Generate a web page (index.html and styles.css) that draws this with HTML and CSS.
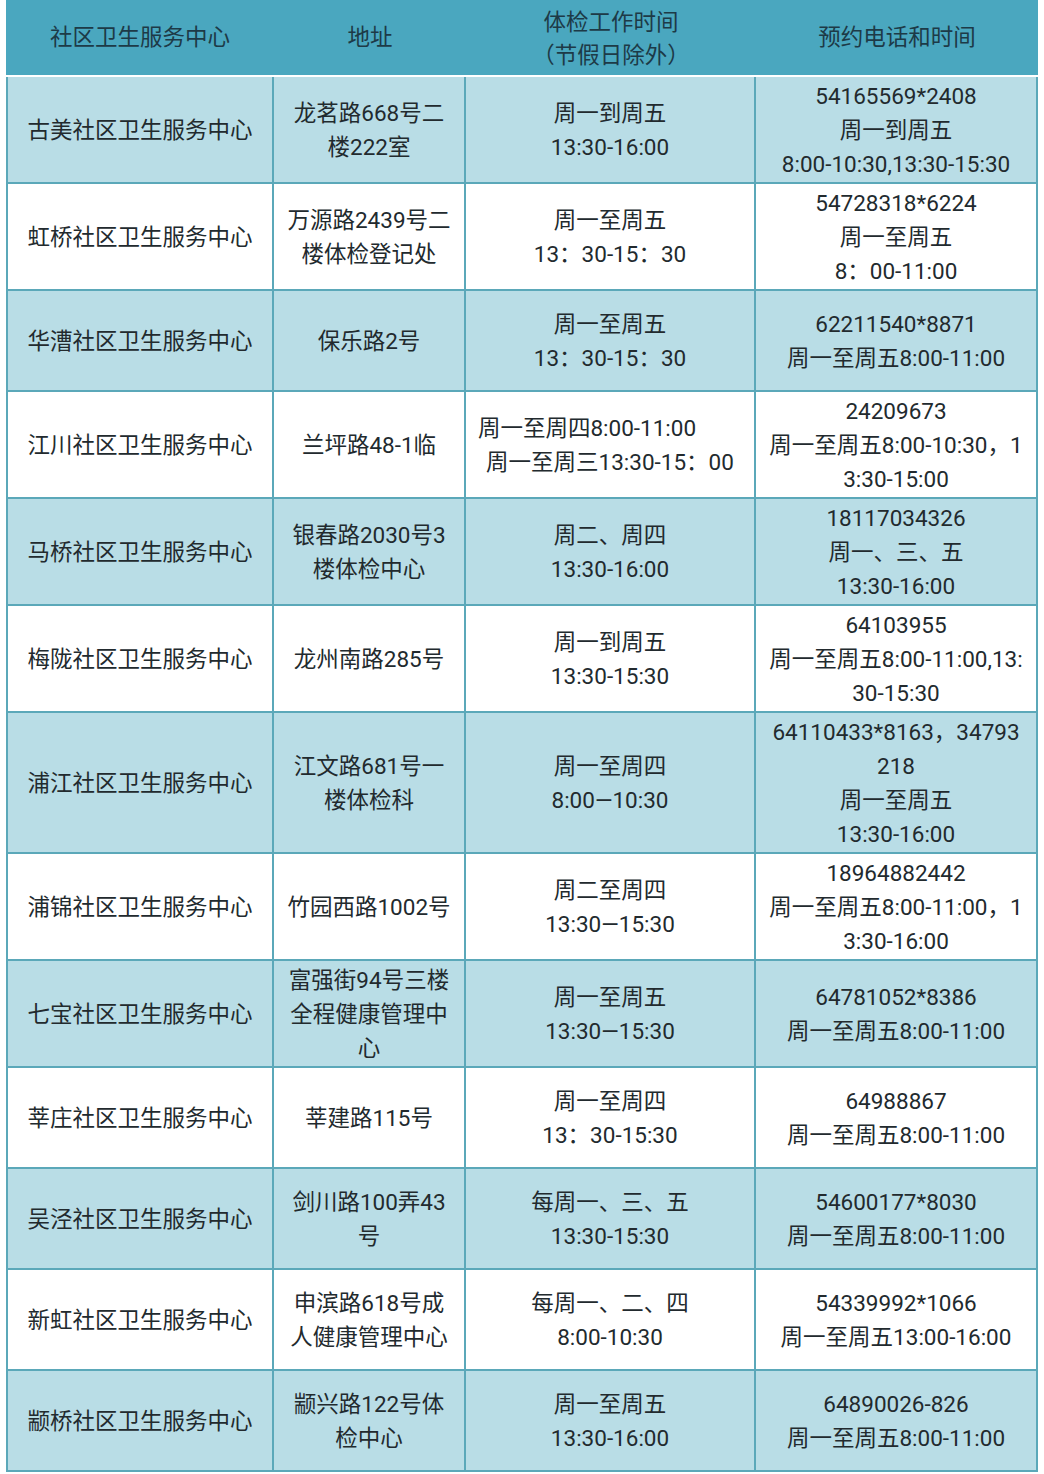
FILE: index.html
```html
<!DOCTYPE html>
<html lang="zh">
<head>
<meta charset="utf-8">
<title>社区卫生服务中心体检</title>
<link rel="stylesheet" href="styles.css">
</head>
<body>
<table class="grid">
  <colgroup>
    <col class="c1"><col class="c2"><col class="c3"><col class="c4">
  </colgroup>
  <thead>
    <tr>
      <th>社区卫生服务中心</th>
      <th>地址</th>
      <th class="two">体检工作时间<br>（节假日除外）</th>
      <th>预约电话和时间</th>
    </tr>
  </thead>
  <tbody>
    <tr class="blue">
      <td>古美社区卫生服务中心</td>
      <td>龙茗路668号二<br>楼222室</td>
      <td>周一到周五<br>13:30-16:00</td>
      <td>54165569*2408<br>周一到周五<br>8:00-10:30,13:30-15:30</td>
    </tr>
    <tr>
      <td>虹桥社区卫生服务中心</td>
      <td>万源路2439号二<br>楼体检登记处</td>
      <td>周一至周五<br>13：30-15：30</td>
      <td>54728318*6224<br>周一至周五<br>8：00-11:00</td>
    </tr>
    <tr class="blue">
      <td>华漕社区卫生服务中心</td>
      <td>保乐路2号</td>
      <td>周一至周五<br>13：30-15：30</td>
      <td>62211540*8871<br>周一至周五8:00-11:00</td>
    </tr>
    <tr>
      <td>江川社区卫生服务中心</td>
      <td>兰坪路48-1临</td>
      <td><span class="l1">周一至周四8:00-11:00</span><br>周一至周三13:30-15：00</td>
      <td>24209673<br>周一至周五8:00-10:30，1<br>3:30-15:00</td>
    </tr>
    <tr class="blue">
      <td>马桥社区卫生服务中心</td>
      <td>银春路2030号3<br>楼体检中心</td>
      <td>周二、周四<br>13:30-16:00</td>
      <td>18117034326<br>周一、三、五<br>13:30-16:00</td>
    </tr>
    <tr>
      <td>梅陇社区卫生服务中心</td>
      <td>龙州南路285号</td>
      <td>周一到周五<br>13:30-15:30</td>
      <td>64103955<br>周一至周五8:00-11:00,13:<br>30-15:30</td>
    </tr>
    <tr class="blue">
      <td>浦江社区卫生服务中心</td>
      <td>江文路681号一<br>楼体检科</td>
      <td>周一至周四<br>8:00—10:30</td>
      <td>64110433*8163，34793<br>218<br>周一至周五<br>13:30-16:00</td>
    </tr>
    <tr>
      <td>浦锦社区卫生服务中心</td>
      <td>竹园西路1002号</td>
      <td>周二至周四<br>13:30—15:30</td>
      <td>18964882442<br>周一至周五8:00-11:00，1<br>3:30-16:00</td>
    </tr>
    <tr class="blue">
      <td>七宝社区卫生服务中心</td>
      <td>富强街94号三楼<br>全程健康管理中<br>心</td>
      <td>周一至周五<br>13:30—15:30</td>
      <td>64781052*8386<br>周一至周五8:00-11:00</td>
    </tr>
    <tr>
      <td>莘庄社区卫生服务中心</td>
      <td>莘建路115号</td>
      <td>周一至周四<br>13：30-15:30</td>
      <td>64988867<br>周一至周五8:00-11:00</td>
    </tr>
    <tr class="blue">
      <td>吴泾社区卫生服务中心</td>
      <td>剑川路100弄43<br>号</td>
      <td>每周一、三、五<br>13:30-15:30</td>
      <td>54600177*8030<br>周一至周五8:00-11:00</td>
    </tr>
    <tr>
      <td>新虹社区卫生服务中心</td>
      <td>申滨路618号成<br>人健康管理中心</td>
      <td>每周一、二、四<br>8:00-10:30</td>
      <td>54339992*1066<br>周一至周五13:00-16:00</td>
    </tr>
    <tr class="blue">
      <td>颛桥社区卫生服务中心</td>
      <td>颛兴路122号体<br>检中心</td>
      <td>周一至周五<br>13:30-16:00</td>
      <td>64890026-826<br>周一至周五8:00-11:00</td>
    </tr>
  </tbody>
</table>
</body>
</html>
```

FILE: styles.css
```css
html, body {
  margin: 0;
  padding: 0;
  background: #ffffff;
}

body {
  font-family: Roboto, "Noto Sans CJK SC", "Noto Sans", sans-serif;
  font-size: 22.5px;
  color: #222a2e;
}

.grid {
  margin-left: 6px;
  width: 1032px;
  table-layout: fixed;
  border-collapse: separate;
  border-spacing: 0;
}

.c1 { width: 268px; }
.c2 { width: 192px; }
.c3 { width: 290px; }
.c4 { width: 282px; }

.grid th {
  height: 73px;
  padding: 0;
  background: #4aa7bf;
  color: #1d3a47;
  font-weight: normal;
  line-height: 33px;
  text-align: center;
  vertical-align: middle;
  border-bottom: 2px solid #ffffff;
}

.grid th.two {
  padding-top: 2px;
}

.grid td {
  height: 96px;
  padding: 1.5px 4px 1.5px 4px;
  line-height: 34px;
  text-align: center;
  vertical-align: middle;
  border-right: 2px solid #5ba8b9;
  border-bottom: 2px solid #5ba8b9;
  background: #ffffff;
  white-space: nowrap;
}

.grid td:first-child {
  border-left: 2px solid #5ba8b9;
}

.grid tr.blue td {
  background: #b9dde6;
}

.l1 {
  margin-right: 46px;
}
```
